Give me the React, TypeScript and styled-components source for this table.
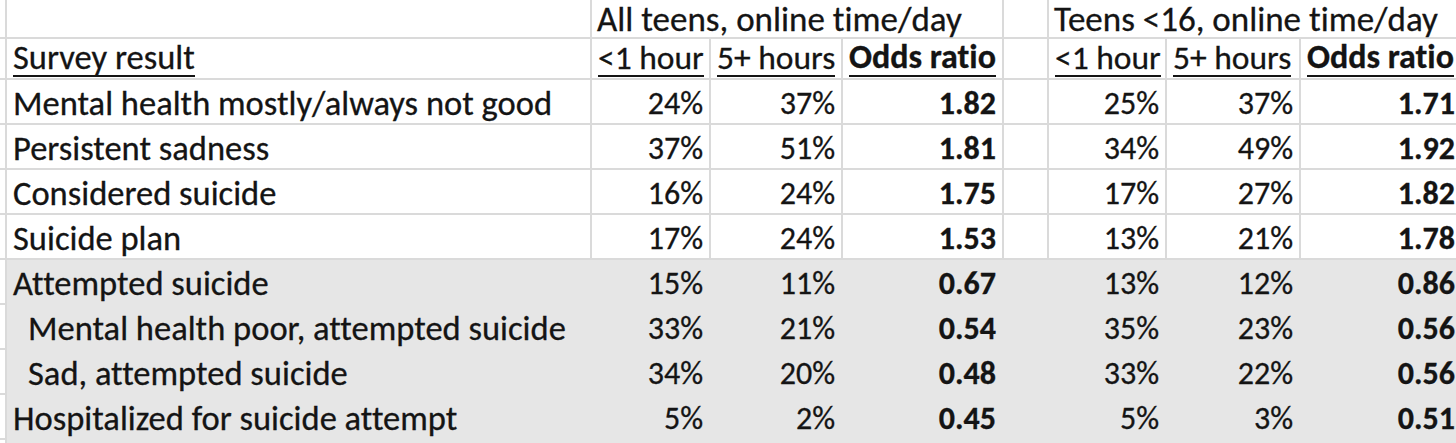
import React from "react";
import styled, { createGlobalStyle } from "styled-components";

const GlobalStyle = createGlobalStyle`
  html, body {
    margin: 0;
    padding: 0;
    background: #ffffff;
    overflow: hidden;
  }
  body {
    font-family: Carlito, Lato, "Open Sans", sans-serif;
    color: #141414;
    font-variant-ligatures: none;
    -webkit-text-stroke: 0.3px currentColor;
  }
`;

const COLS = "7px 585px 119px 132px 161px 45px 118px 134px 162px";
const LINE = "#dadada";
const SHADE = "#e6e6e6";

const Sheet = styled.div`
  width: 1463px;
  display: flex;
  flex-direction: column;
  line-height: 1;
`;

const Row = styled.div<{ $h: number; $shaded?: boolean }>`
  display: grid;
  grid-template-columns: ${COLS};
  height: ${(p) => p.$h}px;
  background: ${(p) => (p.$shaded ? SHADE : "#ffffff")};
`;

const TopRow = styled(Row)`
  grid-template-columns: 7px 585px 412px 45px 414px;
`;

const Cell = styled.div<{
  $align?: "left" | "right";
  $bold?: boolean;
  $indent?: boolean;
  $shaded?: boolean;
  $size?: number;
}>`
  box-sizing: border-box;
  display: flex;
  align-items: center;
  justify-content: ${(p) => (p.$align === "right" ? "flex-end" : "flex-start")};
  padding: 4px ${(p) => (p.$align === "right" ? "6px" : "0")} 0
    ${(p) => (p.$indent ? "21px" : p.$align === "right" ? "0" : "6px")};
  border-right: 2px solid ${(p) => (p.$shaded ? SHADE : LINE)};
  border-bottom: 2px solid ${(p) => (p.$shaded ? SHADE : LINE)};
  font-size: ${(p) => p.$size ?? 32}px;
  font-weight: ${(p) => (p.$bold ? 700 : 400)};
  white-space: nowrap;
`;

const HeadCell = styled(Cell)`
  align-items: flex-end;
  padding-top: 0;
  padding-bottom: 1px;
`;

const RowHead = styled.div`
  box-sizing: border-box;
  background: #ffffff;
  border-right: 2px solid ${LINE};
  border-bottom: 2px solid ${LINE};
`;

const HeadText = styled.span<{ $bold?: boolean; $size?: number }>`
  display: inline-block;
  font-size: ${(p) => p.$size ?? 33.5}px;
  font-weight: ${(p) => (p.$bold ? 700 : 400)};
  line-height: 1;
  padding-bottom: 1px;
  border-bottom: 2px solid #141414;
`;

const GroupTitle = styled(Cell)`
  padding-top: 1px;
  padding-left: 5px;
  font-size: 35px;
`;

type DataRow = {
  label: string;
  v: string[];
  shaded?: boolean;
  indent?: boolean;
};

const rows: DataRow[] = [
  { label: "Mental health mostly/always not good", v: ["24%", "37%", "1.82", "25%", "37%", "1.71"] },
  { label: "Persistent sadness", v: ["37%", "51%", "1.81", "34%", "49%", "1.92"] },
  { label: "Considered suicide", v: ["16%", "24%", "1.75", "17%", "27%", "1.82"] },
  { label: "Suicide plan", v: ["17%", "24%", "1.53", "13%", "21%", "1.78"] },
  { label: "Attempted suicide", v: ["15%", "11%", "0.67", "13%", "12%", "0.86"], shaded: true },
  { label: "Mental health poor, attempted suicide", v: ["33%", "21%", "0.54", "35%", "23%", "0.56"], shaded: true, indent: true },
  { label: "Sad, attempted suicide", v: ["34%", "20%", "0.48", "33%", "22%", "0.56"], shaded: true, indent: true },
  { label: "Hospitalized for suicide attempt", v: ["5%", "2%", "0.45", "5%", "3%", "0.51"], shaded: true },
  { label: "", v: ["", "", "", "", "", ""], shaded: true },
];

export default function App() {
  return (
    <>
      <GlobalStyle />
      <Sheet>
        <TopRow $h={39}>
          <RowHead />
          <Cell />
          <GroupTitle>All teens, online time/day</GroupTitle>
          <Cell />
          <GroupTitle>Teens &lt;16, online time/day</GroupTitle>
        </TopRow>
        <Row $h={41}>
          <RowHead />
          <HeadCell>
            <HeadText $size={34.5}>Survey result</HeadText>
          </HeadCell>
          <HeadCell>
            <HeadText>&lt;1 hour</HeadText>
          </HeadCell>
          <HeadCell>
            <HeadText>5+ hours</HeadText>
          </HeadCell>
          <HeadCell>
            <HeadText $bold $size={34}>Odds ratio</HeadText>
          </HeadCell>
          <HeadCell />
          <HeadCell>
            <HeadText>&lt;1 hour</HeadText>
          </HeadCell>
          <HeadCell>
            <HeadText>5+ hours</HeadText>
          </HeadCell>
          <HeadCell>
            <HeadText $bold $size={34}>Odds ratio</HeadText>
          </HeadCell>
        </Row>
        {rows.map((r, i) => (
          <Row key={i} $h={45} $shaded={r.shaded}>
            <RowHead />
            <Cell $shaded={r.shaded} $indent={r.indent} $size={34.5}>
              {r.label}
            </Cell>
            <Cell $shaded={r.shaded} $align="right">{r.v[0]}</Cell>
            <Cell $shaded={r.shaded} $align="right">{r.v[1]}</Cell>
            <Cell $shaded={r.shaded} $align="right" $bold>{r.v[2]}</Cell>
            <Cell $shaded={r.shaded} />
            <Cell $shaded={r.shaded} $align="right">{r.v[3]}</Cell>
            <Cell $shaded={r.shaded} $align="right">{r.v[4]}</Cell>
            <Cell $shaded={r.shaded} $align="right" $bold>{r.v[5]}</Cell>
          </Row>
        ))}
      </Sheet>
    </>
  );
}
